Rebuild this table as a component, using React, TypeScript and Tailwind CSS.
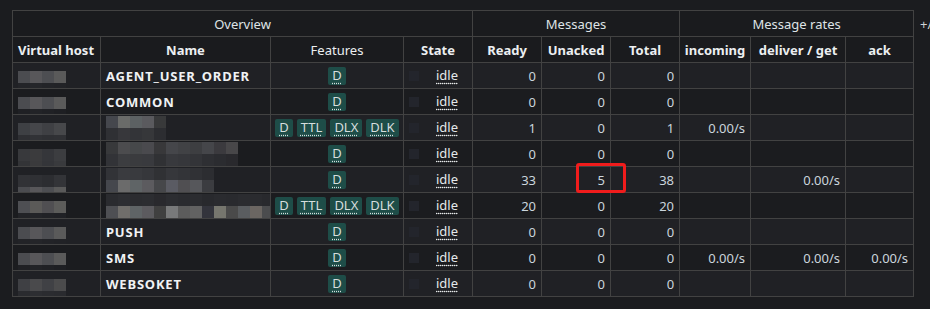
import React from 'react'

type Row = {
  vhost: string[][]
  name?: string
  blur?: string[][]
  features: string[]
  ready: number
  unacked: number
  total: number
  incoming?: string
  deliver?: string
  ack?: string
}

const vh = (a: string[], b: string[]) => [a, b]

const rows: Row[] = [
  { vhost: vh(['#4b4c50', '#58575a', '#4d4e52', '#5a5a5a'], ['#232428', '#25262a', '#232428', '#222327']), name: 'AGENT_USER_ORDER', features: ['D'], ready: 0, unacked: 0, total: 0 },
  { vhost: vh(['#4b4c50', '#58575a', '#4d4e52', '#5a5a5a'], ['#1f2024', '#222327', '#202125', '#1e1f23']), name: 'COMMON', features: ['D'], ready: 0, unacked: 0, total: 0 },
  {
    vhost: vh(['#3e4044', '#45464a', '#3f4044', '#47484b'], ['#2e2f33', '#313236', '#2f3034', '#303135']),
    blur: [['#45474d', '#6a6b69', '#5c6163', '#5a5a5e', '#38393a'], ['#2f3034', '#37373b', '#333438', '#36373a', '#2c2d31']],
    features: ['D', 'TTL', 'DLX', 'DLK'], ready: 1, unacked: 0, total: 1, incoming: '0.00/s',
  },
  {
    vhost: vh(['#38393c', '#3b3b3d', '#35363a', '#3c3d40'], ['#333437', '#3a3a3c', '#343539', '#393a3d']),
    blur: [['#38393b', '#4c4c4e', '#46484a', '#4a4a4e', '#38383a', '#45464a', '#414245', '#3d3e41', '#45464a', '#3b3a3e', '#484749'], ['#323337', '#3c3d40', '#3a3b3e', '#393a3e', '#303134', '#38393d', '#36373b', '#333438', '#2e2f33', '#2b2c30', '#29292d']],
    features: ['D'], ready: 0, unacked: 0, total: 0,
  },
  {
    vhost: vh(['#313236', '#2f3034', '#2c2d31', '#333438'], ['#4b4c50', '#58575a', '#4d4e52', '#5a5a5a']),
    blur: [['#323337', '#3a3b3f', '#393a3e', '#36373b', '#303134', '#36373b', '#333438', '#303135', '#2c2d31'], ['#45474d', '#6b6b6b', '#5f6466', '#5c5b5f', '#46474a', '#5a5b63', '#504f52', '#56575b', '#3b3c40']],
    features: ['D'], ready: 33, unacked: 5, total: 38, deliver: '0.00/s',
  },
  {
    vhost: vh(['#4e4f53', '#5b5a58', '#504f52', '#5c5c5a'], ['#222327', '#232428', '#212226', '#202125']),
    blur: [['#2a2b2f', '#2d2e32', '#2b2c30', '#2c2d31', '#29292d', '#2c2d31', '#2a2b2f', '#2b2c30', '#28292d', '#2a2b2f', '#292a2e', '#2b2c30', '#2a2b2f', '#28292d'], ['#4e4f53', '#706e6b', '#5f6466', '#5c5b5f', '#404040', '#78797a', '#5c5c5c', '#626262', '#33343c', '#76766e', '#4a4a4a', '#5a5d60', '#6b6662', '#4b4c4e']],
    features: ['D', 'TTL', 'DLX', 'DLK'], ready: 20, unacked: 0, total: 20,
  },
  { vhost: vh(['#4b4c50', '#58575a', '#4d4e52', '#5a5a5a'], ['#222327', '#242529', '#222327', '#212226']), name: 'PUSH', features: ['D'], ready: 0, unacked: 0, total: 0 },
  { vhost: vh(['#4b4c50', '#58575a', '#4d4e52', '#5a5a5a'], ['#1f2024', '#222327', '#202125', '#1e1f23']), name: 'SMS', features: ['D'], ready: 0, unacked: 0, total: 0, incoming: '0.00/s', deliver: '0.00/s', ack: '0.00/s' },
  { vhost: vh(['#3f4044', '#4a4a4c', '#404145', '#4b4b4c'], ['#2a2b2f', '#2d2e32', '#2b2c30', '#2a2b2f']), name: 'WEBSOKET', features: ['D'], ready: 0, unacked: 0, total: 0 },
]

function Mosaic({ grid }: { grid: string[][] }) {
  return (
    <div className="flex flex-col">
      {grid.map((line, i) => (
        <div key={i} className="flex">
          {line.map((c, j) => (
            <div key={j} className="w-[12px] h-[12px] shrink-0" style={{ backgroundColor: c }} />
          ))}
        </div>
      ))}
    </div>
  )
}

function Badge({ label }: { label: string }) {
  return (
    <span className="inline-flex items-center h-[18px] px-[4px] rounded-[2px] bg-[#1e4d48] text-[#d6dede] leading-none">
      <span className="underline decoration-dotted underline-offset-[3px]">{label}</span>
    </span>
  )
}

const cell = 'border border-[#424242] p-0 h-[26px] leading-[24px]'
const num = `${cell} text-right pr-[5px] text-[#cbd5dd]`

export default function App() {
  return (
    <div className="w-[930px] h-[309px] overflow-hidden bg-[#1b1c1f] pt-[10px] pl-[12px] flex items-start font-['Noto_Sans',sans-serif] text-[13px]">
      <div className="relative">
        <table className="table-fixed border-collapse w-[901px]">
          <colgroup>
            <col className="w-[88px]" />
            <col className="w-[170px]" />
            <col className="w-[133px]" />
            <col className="w-[69px]" />
            <col className="w-[69px]" />
            <col className="w-[69px]" />
            <col className="w-[69px]" />
            <col className="w-[71px]" />
            <col className="w-[95px]" />
            <col className="w-[68px]" />
          </colgroup>
          <thead>
            <tr className="bg-[#1a1b1e] text-[#dfe3e6]">
              <th colSpan={4} className={`${cell} font-normal`}>Overview</th>
              <th colSpan={3} className={`${cell} font-normal`}>Messages</th>
              <th colSpan={3} className={`${cell} font-normal`}>Message rates</th>
            </tr>
            <tr className="bg-[#1a1b1e] text-[#eceff1]">
              <th className={`${cell} font-bold text-left pl-[5px] whitespace-nowrap`}>Virtual host</th>
              <th className={`${cell} font-bold`}>Name</th>
              <th className={`${cell} font-normal`}>Features</th>
              <th className={`${cell} font-bold`}>State</th>
              <th className={`${cell} font-bold`}>Ready</th>
              <th className={`${cell} font-bold`}>Unacked</th>
              <th className={`${cell} font-bold`}>Total</th>
              <th className={`${cell} font-bold whitespace-nowrap`}>incoming</th>
              <th className={`${cell} font-bold whitespace-nowrap`}>deliver / get</th>
              <th className={`${cell} font-bold`}>ack</th>
            </tr>
          </thead>
          <tbody>
            {rows.map((r, i) => (
              <tr key={i} className={i % 2 === 0 ? 'bg-[#202125]' : 'bg-[#1b1c1f]'}>
                <td className={`${cell} pl-[5px]`}>
                  <div className="h-[24px] pt-[7px] overflow-hidden">
                    <Mosaic grid={r.vhost} />
                  </div>
                </td>
                <td className={`${cell} pl-[5px] font-bold text-[#f0f2f4] whitespace-nowrap tracking-[0.8px]`}>
                  {r.name ? (
                    r.name
                  ) : (
                    <div className="h-[24px] overflow-hidden">
                      <Mosaic grid={r.blur!} />
                    </div>
                  )}
                </td>
                <td className={cell}>
                  <div className="flex justify-center items-center gap-[4px] h-[24px]">
                    {r.features.map(f => <Badge key={f} label={f} />)}
                  </div>
                </td>
                <td className={cell}>
                  <div className="flex items-center pl-[5px] h-[24px]">
                    <span className="w-[10px] h-[10px] bg-[#23252c]" />
                    <span className="ml-[17px] leading-[15px] text-[#e4e8ea] underline decoration-dotted underline-offset-[3px] border-b border-dotted border-[#777]">idle</span>
                  </div>
                </td>
                <td className={num}>{r.ready}</td>
                <td className={num}>{r.unacked}</td>
                <td className={num}>{r.total}</td>
                <td className={num}>{r.incoming}</td>
                <td className={num}>{r.deliver}</td>
                <td className={num}>{r.ack}</td>
              </tr>
            ))}
          </tbody>
        </table>
        <div className="absolute left-[564px] top-[153px] w-[50px] h-[30px] border-[3px] border-[#f01c1c] rounded-[3px]" />
      </div>
      <span className="ml-[6px] mt-[5px] text-[#cfd3d6] whitespace-nowrap">+/-</span>
    </div>
  )
}
